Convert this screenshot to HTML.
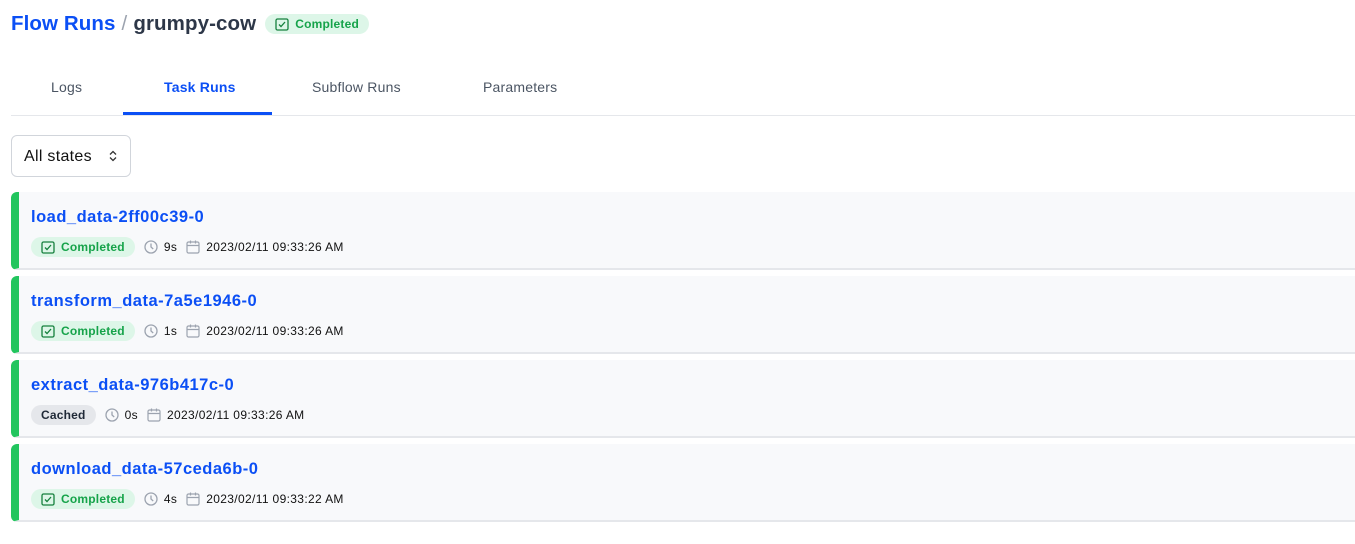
<!DOCTYPE html>
<html><head><style>
*{box-sizing:border-box;margin:0;padding:0}
body{width:1355px;height:544px;background:#fff;font-family:"Liberation Sans",sans-serif;color:#1f2937;overflow:hidden;position:relative}
.hdr{position:absolute;left:11px;top:12px;display:flex;align-items:center;font-size:20.5px;font-weight:bold;white-space:nowrap;letter-spacing:0.1px}
.hdr .a{color:#0b4ff5}.hdr .s{color:#9ca3af;font-weight:normal;margin:0 6px}.hdr .n{color:#2d3748}
.badge{display:inline-flex;align-items:center;gap:6px;background:#ddf6e8;color:#16a34a;font-size:12px;font-weight:bold;border-radius:10px;height:20px;padding:0 10px 0 10px;letter-spacing:0.2px}
.badge.c{background:#e5e7eb;color:#1f2937}
.tabs{position:absolute;left:11px;top:62px;right:0;height:54px;border-bottom:1px solid #e5e7eb}
.tab{position:absolute;top:17px;font-size:14px;color:#4b5563;text-align:center;letter-spacing:0.2px}
.tab.on{color:#0b4ff5;font-weight:bold}
.ul{position:absolute;left:112px;width:149px;top:50px;height:3px;background:#0b4ff5}
.sel{position:absolute;left:11px;top:135px;width:120px;height:42px;border:1px solid #d1d5db;border-radius:6px;font-size:16px;padding:12px 0 0 12px;color:#111;letter-spacing:0.3px}
.card{position:absolute;left:11px;right:-10px;height:78px;background:#f8f9fb;border-radius:6px;border-left:8px solid #22c55e;border-bottom:2px solid #e5e7eb}
.card .t{position:absolute;left:12px;top:16px;font-size:16.5px;font-weight:bold;color:#0b4ff5;letter-spacing:0.5px}
.meta{position:absolute;left:12px;top:45px;display:flex;align-items:center;font-size:12px;color:#111;gap:6px;white-space:nowrap;letter-spacing:0.35px}
.ic{display:inline-flex;align-items:center;gap:6px;margin-left:3px}
</style></head><body>
<div class="hdr"><span class="a">Flow Runs</span><span class="s">/</span><span class="n">grumpy-cow</span>
<span class="badge" style="margin-left:9px"><svg width="14" height="13" viewBox="0 0 14 13"><rect x="1" y="1" width="12" height="11" rx="1.5" fill="none" stroke="#15803d" stroke-width="1.3"/><path d="M4 6.5l2 2 4-4.5" fill="none" stroke="#15803d" stroke-width="1.3"/></svg>Completed</span></div>
<div class="tabs">
<div class="tab" style="left:40px">Logs</div>
<div class="tab on" style="left:153px">Task Runs</div>
<div class="tab" style="left:301px">Subflow Runs</div>
<div class="tab" style="left:472px">Parameters</div>
<div class="ul"></div></div>
<div class="sel">All states<svg style="position:absolute;left:97px;top:14px" width="8" height="12" viewBox="0 0 8 12"><path d="M1 4.5L4 1.5 7 4.5M1 7.5L4 10.5 7 7.5" fill="none" stroke="#333" stroke-width="1.3"/></svg></div>

<div class="card" style="top:192px"><div class="t">load_data-2ff00c39-0</div><div class="meta">
<span class="badge">CHK Completed</span></div></div>
<div class="card" style="top:276px"><div class="t">transform_data-7a5e1946-0</div><div class="meta"><span class="badge">CHK Completed</span></div></div>
<div class="card" style="top:360px"><div class="t">extract_data-976b417c-0</div><div class="meta"><span class="badge c">Cached</span></div></div>
<div class="card" style="top:444px"><div class="t">download_data-57ceda6b-0</div><div class="meta"><span class="badge">CHK Completed</span></div></div>
<script>
const chk='<svg width="14" height="13" viewBox="0 0 14 13"><rect x="1" y="1" width="12" height="11" rx="1.5" fill="none" stroke="#15803d" stroke-width="1.3"/><path d="M4 6.5l2 2 4-4.5" fill="none" stroke="#15803d" stroke-width="1.3"/></svg>';
const clk='<svg width="14" height="14" viewBox="0 0 14 14"><circle cx="7" cy="7" r="6" fill="none" stroke="#9ca3af" stroke-width="1.3"/><path d="M7 3.5V7l2.2 2" fill="none" stroke="#9ca3af" stroke-width="1.3"/></svg>';
const cal='<svg width="14" height="14" viewBox="0 0 14 14"><rect x="1" y="2" width="12" height="11" rx="1.5" fill="none" stroke="#9ca3af" stroke-width="1.2"/><path d="M1 5.5h12M4.5 0.5v3M9.5 0.5v3" stroke="#9ca3af" stroke-width="1.2"/></svg>';
const d=[["9s","2023/02/11 09:33:26 AM"],["1s","2023/02/11 09:33:26 AM"],["0s","2023/02/11 09:33:26 AM"],["4s","2023/02/11 09:33:22 AM"]];
document.querySelectorAll('.meta').forEach((m,i)=>{
 m.innerHTML=m.innerHTML.replace('CHK ',chk)+'<span class="ic">'+clk+d[i][0]+'</span><span class="ic">'+cal+d[i][1]+'</span>';});
</script>
</body></html>
